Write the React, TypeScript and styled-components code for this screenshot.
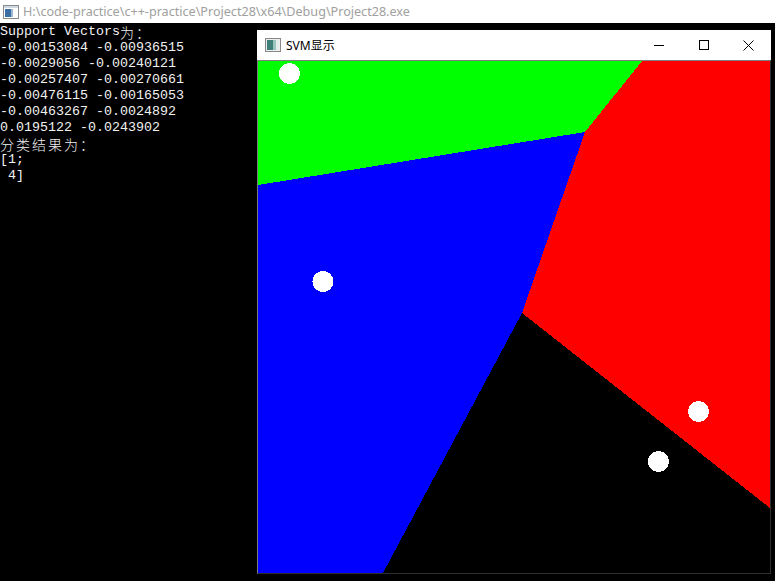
import React from "react";
import styled, { createGlobalStyle } from "styled-components";

const Global = createGlobalStyle`
  html, body { margin: 0; padding: 0; background: #000; }
  body { width: 775px; height: 581px; overflow: hidden; }
`;

const Desktop = styled.div`
  position: relative;
  width: 775px;
  height: 581px;
  background: #000;
  overflow: hidden;
`;

const ConsoleTitle = styled.div`
  display: flex;
  align-items: center;
  gap: 4px;
  height: 23px;
  padding-left: 3px;
  background: #fff;
  font-family: "Segoe UI", "Noto Sans", "Liberation Sans", sans-serif;
  font-size: 12.6px;
  color: #a0a0a0;
  white-space: nowrap;
`;

const ConsoleBody = styled.div`
  display: flex;
  flex-direction: column;
  padding-top: 1px;
  font-family: "Liberation Mono", "Noto Sans CJK SC", monospace;
  font-size: 13.333px;
  color: #f2f2f2;
`;

const Line = styled.div`
  height: 16px;
  line-height: 16px;
  white-space: pre;
`;

const Wide = styled.span`
  display: inline-block;
  height: 16px;
  vertical-align: top;
  font-family: "Noto Sans CJK SC", sans-serif;
  font-size: 14px;
  line-height: 16px;
  letter-spacing: 2px;
  font-weight: 300;
`;

const Window = styled.div`
  position: absolute;
  left: 257px;
  top: 30px;
  width: 514px;
  display: flex;
  flex-direction: column;
`;

const TitleBar = styled.div`
  display: flex;
  align-items: center;
  height: 30px;
  background: #fff;
  padding-left: 8px;
`;

const Title = styled.span`
  flex: 1;
  margin-left: 5px;
  font-family: "Segoe UI", "Noto Sans", "Liberation Sans", "Noto Sans CJK SC", sans-serif;
  font-size: 12px;
  color: #000;
`;

const CtrlButton = styled.div`
  width: 45px;
  height: 30px;
  display: flex;
  align-items: center;
  justify-content: center;
`;

const CanvasArea = styled.div`
  display: flex;
  border-top: 1px solid #808080;
  border-left: 1px solid #7a7a7a;
  border-right: 1px solid #2e2e2e;
  border-bottom: 1px solid #2e2e2e;
`;

const lines: React.ReactNode[] = [
  <>Support Vectors<Wide>为：</Wide></>,
  "-0.00153084 -0.00936515",
  "-0.0029056 -0.00240121",
  "-0.00257407 -0.00270661",
  "-0.00476115 -0.00165053",
  "-0.00463267 -0.0024892",
  "0.0195122 -0.0243902",
  <><Wide>分类结果为：</Wide></>,
  "[1;",
  " 4]",
];

const points = [
  [31.5, 12.5],
  [65, 220.5],
  [440.5, 350.5],
  [400.5, 400.5],
];

export default function App() {
  return (
    <Desktop>
      <Global />
      <ConsoleTitle>
        <svg width="16" height="14" viewBox="0 0 16 14">
          <rect x="0.5" y="0.5" width="15" height="13" fill="#fff" stroke="#8a8a8a" />
          <rect x="1" y="1" width="14" height="2" fill="#cfd8e3" />
          <rect x="2" y="4" width="6" height="8" fill="#3a6ea5" />
          <rect x="8" y="4" width="2" height="8" fill="#9fb8d0" />
        </svg>
        <span>H:\code-practice\c++-practice\Project28\x64\Debug\Project28.exe</span>
      </ConsoleTitle>
      <ConsoleBody>
        {lines.map((l, i) => (
          <Line key={i}>{l}</Line>
        ))}
      </ConsoleBody>
      <Window>
        <TitleBar>
          <svg width="16" height="14" viewBox="0 0 16 14">
            <rect x="0.5" y="0.5" width="15" height="13" fill="#eee" stroke="#888" />
            <rect x="2" y="2" width="6" height="10" fill="#3f7f7a" />
            <rect x="8" y="2" width="3" height="10" fill="#9cc5bf" />
            <rect x="11" y="2" width="3" height="10" fill="#e4ecec" />
          </svg>
          <Title>SVM显示</Title>
          <CtrlButton>
            <svg width="10" height="10" viewBox="0 0 10 10">
              <line x1="0" y1="5.5" x2="10" y2="5.5" stroke="#000" strokeWidth="1" />
            </svg>
          </CtrlButton>
          <CtrlButton>
            <svg width="10" height="10" viewBox="0 0 10 10">
              <rect x="0.5" y="0.5" width="9" height="9" fill="none" stroke="#000" strokeWidth="1" />
            </svg>
          </CtrlButton>
          <CtrlButton>
            <svg width="11" height="11" viewBox="0 0 11 11">
              <path d="M0.5 0.5 L10.5 10.5 M10.5 0.5 L0.5 10.5" stroke="#000" strokeWidth="1" />
            </svg>
          </CtrlButton>
        </TitleBar>
        <CanvasArea>
          <svg width="512" height="512" viewBox="0 0 512 512" shapeRendering="crispEdges">
            <rect x="0" y="0" width="512" height="512" fill="#000" />
            <polygon points="0,0 384,0 327,71 0,124" fill="#00ff00" />
            <polygon points="384,0 512,0 512,447 264,252 327,71" fill="#ff0000" />
            <polygon points="0,124 327,71 264,252 125,512 0,512" fill="#0000ff" />
            {points.map(([cx, cy], i) => (
              <circle key={i} cx={cx} cy={cy} r={10.5} fill="#fff" />
            ))}
          </svg>
        </CanvasArea>
      </Window>
    </Desktop>
  );
}
